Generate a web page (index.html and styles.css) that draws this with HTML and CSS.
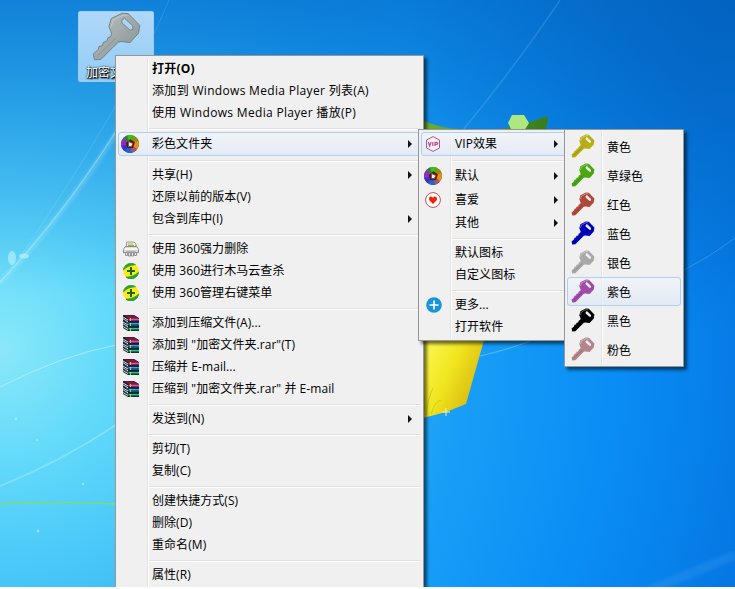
FILE: index.html
```html
<!DOCTYPE html>
<html lang="zh-CN">
<head>
<meta charset="utf-8">
<title>桌面</title>
<link rel="stylesheet" href="styles.css">
</head>
<body>
<svg width="0" height="0" class="defs" aria-hidden="true">
  <defs>
    <linearGradient id="steel" x1="0" y1="0" x2="1" y2="1"><stop offset="0" stop-color="#bcc4c4"/><stop offset="1" stop-color="#858f8f"/></linearGradient>
    <symbol id="key" viewBox="0 0 24 24">
      <path fill-rule="evenodd" d="M9.400 3.200L14.800 .6 17.800 .8 23.400 6.600 22.800 10.400 18.600 15 14.200 14.400 12.800 14.800 4.400 23.200 1.200 23.400 .6 20.600 3.200 18.200 3.400 16.800 5 16.600 5.600 14.800 7.200 14.400 7.800 12.600 9.200 12 9.600 10.400 8.300 7.200ZM14.600 4.200L15.900 3 20 6.900 20 8.600 18.700 8.900 14.700 5.400Z"/>
      <path d="M2.600 21.600L11.300 13.200" stroke="#000" stroke-opacity=".16" fill="none"/>
      <path d="M9.500 7L10.300 4 15 1.700 17.400 1.800" stroke="#fff" stroke-opacity=".35" fill="none"/>
    </symbol>
    <symbol id="lens" viewBox="0 0 18 18">
      <circle cx="9" cy="9" r="9" fill="#4a4a55"/>
      <path d="M9 9L4 1.500A9 9 0 0 1 13 1Z" fill="#22cf12"/>
      <path d="M9 9L12 .6A9 9 0 0 1 18 8Z" fill="#918c16"/>
      <path d="M9 9L17.500 6A9 9 0 0 1 15.500 15Z" fill="#e59016"/>
      <path d="M9 9L16 14A9 9 0 0 1 9 18Z" fill="#a55570"/>
      <path d="M9 9L11 17.800A9 9 0 0 1 3 15.500Z" fill="#2164d8"/>
      <path d="M9 9L4 16.200A9 9 0 0 1 0 8Z" fill="#4130c4"/>
      <path d="M9 9L.2 11A9 9 0 0 1 3 2.500Z" fill="#8b31c2"/>
      <path d="M9 9L1.700 4A9 9 0 0 1 6 .5Z" fill="#526a5c"/>
      <path d="M9.500 4.300L13.800 7.500 12.200 13 6.500 13.200 4.700 8Z" fill="#4a1a20"/>
      <path d="M7.700 6.600L11.900 8.600 10.500 11.500 7.500 11.500Z" fill="#fff" stroke="#a34a2c"/>
    </symbol>
    <symbol id="shredder" viewBox="0 0 16 16">
      <path d="M3.500 6V1h7.500l2 2V6" fill="#f1f3d8" stroke="#999"/><path d="M5 3h5M5 4.500h6" stroke="#a2b93c"/>
      <path d="M2.300 5.500h11.400l1.800 3v3.200H.5V8.500Z" fill="#dcdcdc" stroke="#888"/>
      <path d="M1.500 8h13" stroke="#fff" stroke-width="1.400"/><path d="M3 10.300h10" stroke="#aaa"/>
      <path d="M2.500 12v2.500h2v-2.500m1 0v3h2v-3m1 0v3h2v-3m1 0v2.500h2v-2.500" fill="#eee" stroke="#888" stroke-width=".9"/>
    </symbol>
    <symbol id="shield" viewBox="0 0 16 16">
      <circle cx="8" cy="8" r="7.800" fill="#ffe916"/>
      <path d="M.3 7A7.800 7.800 0 0 1 12.500 1.700Q5 2 .3 7Z" fill="#2ba238" stroke="#2ba238" stroke-width=".8"/>
      <path d="M15.700 9A7.800 7.800 0 0 1 3 14.200Q11 14 15.700 9Z" fill="#2ba238" stroke="#2ba238" stroke-width=".9"/>
      <path d="M8 4v8M4 8h8" stroke="#116d18" stroke-width="2"/>
    </symbol>
    <symbol id="rar" viewBox="0 0 16 16">
      <path d="M0 0h11l5 3v13H5L0 13Z" fill="#182029"/>
      <path d="M1 .5h10l4.500 2.800H5Z" fill="#821642"/><path d="M5.500 3.500H16v2.200H5.500Z" fill="#c52780"/><path d="M6 4.300h10" stroke="#e884bd" stroke-width=".7"/>
      <path d="M2 6l4 1.700h10v3H6Z" fill="#165d9b"/><path d="M6 8.500h10" stroke="#37a7dc"/>
      <path d="M2 11l4 1.700h10v2.600H6Z" fill="#087558"/><path d="M6 13.500h10" stroke="#28c88c"/>
      <path d="M0 2l5 3M0 3.800l5 3M0 7l5 3M0 8.800l5 3M0 11.500l5 3" stroke="#eee" stroke-width=".9"/>
      <path d="M7.500 3v3M7.500 8v3M7.500 13v3" stroke="#e1cf54" stroke-width=".9"/>
    </symbol>
  </defs>
</svg>
<main class="desktop">
  <svg class="wallpaper" viewBox="0 0 735 587" aria-hidden="true">
    <defs>
      <radialGradient id="glow" gradientUnits="userSpaceOnUse" cx="0" cy="350" r="760">
        <stop offset="0" stop-color="#8ae8f9"/><stop offset=".16" stop-color="#60d8fa"/><stop offset=".35" stop-color="#3fc0f7"/><stop offset=".6" stop-color="#1a9ff7"/><stop offset=".8" stop-color="#0a8ef5"/><stop offset="1" stop-color="#0578e4"/>
      </radialGradient>
      <linearGradient id="sky" x1="0" y1="0" x2="0" y2="1"><stop offset="0" stop-color="#0770cc" stop-opacity=".72"/><stop offset=".25" stop-color="#0878d4" stop-opacity=".35"/><stop offset=".5" stop-color="#0875d0" stop-opacity="0"/></linearGradient>
      <radialGradient id="corner" gradientUnits="userSpaceOnUse" cx="735" cy="0" r="330"><stop offset="0" stop-color="#0058b4" stop-opacity=".6"/><stop offset="1" stop-color="#0058b4" stop-opacity="0"/></radialGradient>
      <linearGradient id="gold" x1="0" y1="0" x2="1" y2=".6"><stop offset="0" stop-color="#fdfb55"/><stop offset=".5" stop-color="#f0e51f"/><stop offset="1" stop-color="#d6b40d"/></linearGradient>
      <linearGradient id="leaf"><stop offset="0" stop-color="#6db02a"/><stop offset="1" stop-color="#367d1c"/></linearGradient>
      <filter id="soft"><feGaussianBlur stdDeviation="1.500"/></filter>
    </defs>
    <path d="M0 0H735V587H0Z" fill="url(#glow)"/><path d="M0 0H735V587H0Z" fill="url(#sky)"/><path d="M0 0H735V587H0Z" fill="url(#corner)"/>
    <g fill="none" stroke="#cdf7ff">
      <path d="M0 283Q65 215 120 127" stroke-width="5" stroke-opacity=".2" filter="url(#soft)"/>
      <path d="M0 282Q65 213 120 125" stroke-opacity=".4" stroke-width="1.200"/>
      <path d="M20 257Q130 95 169 0" stroke-opacity=".15"/>
      <path d="M0 387Q60 356 116 345" stroke-opacity=".55"/>
      <path d="M0 486Q60 462 116 425" stroke-opacity=".35" stroke-width="1.500"/>
      <path d="M463 130Q520 60 560 0" stroke-opacity=".14" stroke-width="1.500"/><path d="M480 356Q510 349 530 341" stroke-opacity=".35"/>
      <path d="M684 270Q710 257 735 238" stroke-opacity=".2"/>
      <path d="M650 590L735 555" stroke-width="9" stroke-opacity=".08" filter="url(#soft)"/>
    </g>
    <path d="M0 504Q50 501 116 504" fill="none" stroke="#80dc72" stroke-width="1.500"/>
    <g fill="#c9f7fb" fill-opacity=".55"><ellipse cx="12" cy="258" rx="4" ry="7"/><ellipse cx="24" cy="256" rx="5" ry="2.500"/><circle cx="16" cy="419" r="1.200"/><circle cx="37" cy="440" r="1"/><circle cx="83" cy="484" r="1.200"/><circle cx="38" cy="531" r="1.400"/></g>
    <path d="M424 121Q440 128 460 129H500Q524 125 544 117Q549 115 548 120L545 132H424Z" fill="url(#leaf)"/>
    <path d="M512 115h12l5 8-5 8h-12l-4-8Z" fill="#aee780"/>
    <path d="M423 340H484L466 404 446 412 423 418Z" fill="url(#gold)"/>
    <path d="M426 415Q428 398 433 388M431 414Q435 401 441 400M424 412V394" fill="none" stroke="#b5c716" stroke-opacity=".7"/>
    <path d="M446 408v8M442 412h8" stroke="#f7f6a0"/>
  </svg>
  <figure class="shortcut"><svg class="bigkey" viewBox="0 0 24 24" fill="url(#steel)"><use href="#key"/></svg><figcaption>加密文件夹</figcaption></figure>

  <nav class="menu main-menu">
    <div class="item strong">打开(O)</div>
    <div class="item wide">添加到 Windows Media Player 列表(A)</div>
    <div class="item wide">使用 Windows Media Player 播放(P)</div>
    <hr>
    <div class="item tall active more"><svg class="icon i18"><use href="#lens"/></svg>彩色文件夹</div>
    <hr>
    <div class="item more">共享(H)</div>
    <div class="item">还原以前的版本(V)</div>
    <div class="item more">包含到库中(I)</div>
    <hr>
    <div class="item"><svg class="icon"><use href="#shredder"/></svg>使用 360强力删除</div>
    <div class="item"><svg class="icon"><use href="#shield"/></svg>使用 360进行木马云查杀</div>
    <div class="item"><svg class="icon"><use href="#shield"/></svg>使用 360管理右键菜单</div>
    <hr>
    <div class="item"><svg class="icon"><use href="#rar"/></svg>添加到压缩文件(A)...</div>
    <div class="item"><svg class="icon"><use href="#rar"/></svg>添加到 "加密文件夹.rar"(T)</div>
    <div class="item"><svg class="icon"><use href="#rar"/></svg>压缩并 E-mail...</div>
    <div class="item"><svg class="icon"><use href="#rar"/></svg>压缩到 "加密文件夹.rar" 并 E-mail</div>
    <hr>
    <div class="item more">发送到(N)</div>
    <hr>
    <div class="item">剪切(T)</div>
    <div class="item">复制(C)</div>
    <hr>
    <div class="item">创建快捷方式(S)</div>
    <div class="item">删除(D)</div>
    <div class="item">重命名(M)</div>
    <hr>
    <div class="item">属性(R)</div>
  </nav>

  <nav class="menu sub-menu">
    <div class="item tall active more"><svg class="icon" viewBox="0 0 16 16"><path d="M8 .6L14.500 4v8L8 15.400 1.500 12V4Z" fill="#faf1f8" stroke="#b05287"/><path d="M3.300 6l1.400 4L6.200 6M7.800 6v4M10 10V6.300h1.500q1.300 0 1.300 1t-1.300 1H10" fill="none" stroke="#b05287" stroke-width="1.200"/></svg>VIP效果</div>
    <hr>
    <div class="item tall more"><svg class="icon i18"><use href="#lens"/></svg>默认</div>
    <div class="item tall more"><svg class="icon" viewBox="0 0 16 16"><circle cx="8" cy="8" r="7.400" fill="#fff" stroke="#b7554d"/><path d="M8 12L4.300 8.300Q3.300 5.200 5.800 4.600 7.400 4.500 8 6 8.600 4.500 10.200 4.600 12.700 5.200 11.700 8.300Z" fill="#f02308"/></svg>喜爱</div>
    <div class="item more">其他</div>
    <hr>
    <div class="item">默认图标</div>
    <div class="item">自定义图标</div>
    <hr>
    <div class="item"><svg class="icon plus" viewBox="0 0 16 16"><circle cx="8" cy="8" r="7.800" fill="#1993d9"/><path d="M8 3.500v9M3.500 8h9" stroke="#fff" stroke-width="1.600"/></svg>更多...</div>
    <div class="item">打开软件</div>
  </nav>

  <nav class="menu color-menu">
    <div class="item yellow"><svg class="icon"><use href="#key"/></svg>黄色</div>
    <div class="item green"><svg class="icon"><use href="#key"/></svg>草绿色</div>
    <div class="item red"><svg class="icon"><use href="#key"/></svg>红色</div>
    <div class="item blue"><svg class="icon"><use href="#key"/></svg>蓝色</div>
    <div class="item silver"><svg class="icon"><use href="#key"/></svg>银色</div>
    <div class="item purple active"><svg class="icon"><use href="#key"/></svg>紫色</div>
    <div class="item black"><svg class="icon"><use href="#key"/></svg>黑色</div>
    <div class="item pink"><svg class="icon"><use href="#key"/></svg>粉色</div>
  </nav>
</main>
</body>
</html>
```
FILE: styles.css
```css
* { box-sizing: border-box; }
body { margin: 0; background: #fff; overflow: hidden; font: 12px/22px "Open Sans", "Noto Sans CJK SC", sans-serif; color: #000; }
.defs { position: absolute; }
.desktop { position: relative; width: 735px; height: 587px; overflow: hidden; }
.wallpaper { display: block; width: 735px; height: 587px; }

.shortcut { position: absolute; left: 78px; top: 11px; width: 76px; height: 71px; margin: 0; display: flex; flex-direction: column; align-items: center; border: 1px solid #9fcbf5; border-radius: 2px; background: linear-gradient(#b0d7f7, #93cdf7); }
.bigkey { width: 49px; height: 49px; flex: none; stroke: #6d7777; stroke-width: .4; }
.shortcut figcaption { color: #fff; line-height: 24px; text-shadow: 1px 1px 2px #000, 0 0 2px #000, 1px 1px 1px #000; }

.menu { --gutter: 31px; position: absolute; padding: 2px; border: 1px solid #979797; background: #f0f0f0; box-shadow: 3px 3px 3px rgba(0, 0, 0, .55); }
.menu::before { content: ""; position: absolute; left: var(--gutter); top: 2px; bottom: 2px; width: 2px; background: linear-gradient(90deg, #e2e3e3 50%, #fff 50%); }
.main-menu { left: 115px; top: 55px; width: 309px; height: 536px; }
.sub-menu { left: 418px; top: 129px; width: 160px; height: 212px; }
.color-menu { left: 564px; top: 129px; width: 120px; height: 238px; --gutter: 36px; }

.item { position: relative; display: flex; align-items: center; height: 22px; padding-left: 33px; border: 1px solid transparent; border-radius: 3px; white-space: pre; letter-spacing: .06px; }
.main-menu .item { margin-right: 1px; }
.item.wide { letter-spacing: .32px; }
.tall { height: 24px; }
.item.strong { font-weight: 700; letter-spacing: .2px; }
.active { border-color: #aecff7; background: linear-gradient(rgba(242, 245, 250, .7), rgba(222, 232, 247, .7)); }
.icon { width: 16px; height: 16px; margin-left: -29px; margin-right: 13px; flex: none; }
.i18 { width: 18px; height: 18px; margin-left: -31px; }
.sub-menu .icon { margin-left: -30px; margin-right: 14px; }
.sub-menu .i18 { margin-left: -31px; margin-right: 13px; }
.sub-menu .plus { margin-left: -29px; margin-right: 13px; }
.more::after { content: ""; margin-left: auto; margin-right: 7px; border: 4px solid transparent; border-left-color: #111; border-right: 0; }
.sub-menu .more::after { margin-right: 16px; }

hr { position: relative; height: 2px; margin: 4px 1px 2px 31px; border: 0; background: linear-gradient(#e0e0e0 50%, #fff 50%); }

.color-menu .item { height: 29px; padding: 2px 0 0 39px; }
.color-menu .icon { width: 24px; height: 24px; margin: -3px 12px 0 -36px; }
.yellow .icon { fill: #b8ad12; }
.green .icon { fill: #48a80c; }
.red .icon { fill: #b2483c; }
.blue .icon { fill: #0000b8; }
.silver .icon { fill: #a9a9a9; }
.purple .icon { fill: #a04ba8; }
.black .icon { fill: #000; }
.pink .icon { fill: #b4848b; }
```
